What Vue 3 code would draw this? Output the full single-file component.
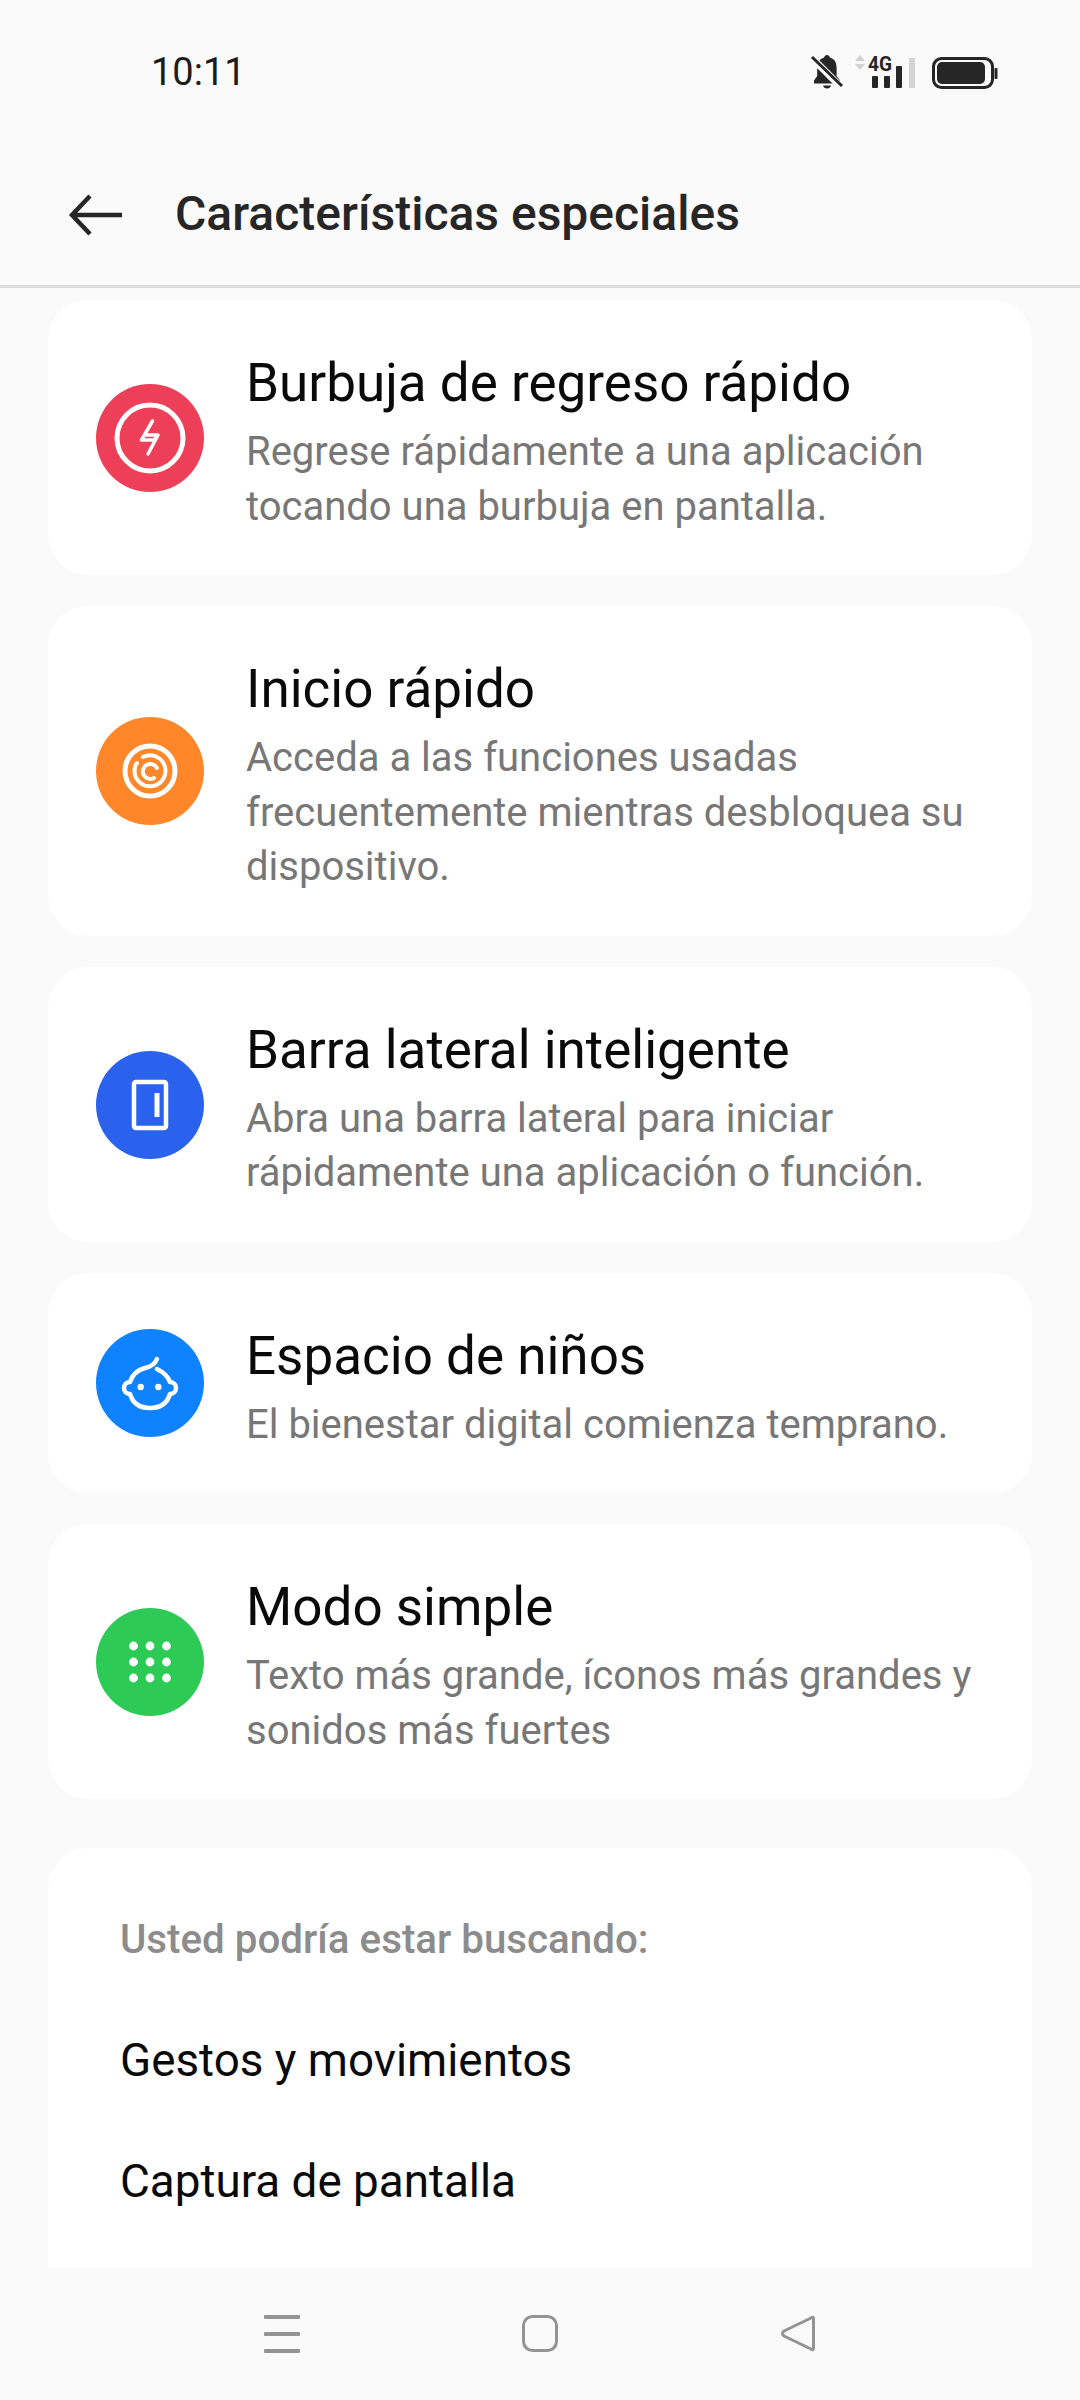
<template>
  <div class="screen">
    <div class="status-bar">
      <span class="clock">10:11</span>
      <svg class="status-icons" width="192" height="40" viewBox="0 0 192 40">
        <!-- bell with slash -->
        <path d="M21 3c1.500 0 2.600 1 2.800 2.600 5 1.400 6.800 5.400 6.800 10.500v8l3.400 4.500v2.900H8v-2.900l3.200-4.500v-8c0-5 2-9.100 7-10.500C18.400 4 19.500 3 21 3z" fill="#262626" />
        <path d="M17 33.500h8c-.4 1.900-2 3-4 3s-3.600-1.100-4-3z" fill="#262626" />
        <path d="M6 6l29 29" stroke="#fafafa" stroke-width="7" />
        <path d="M6 5l30 29" stroke="#262626" stroke-width="3" />
        <path d="M49 9l5-6 5 6zM49 12l5 6 5-6z" fill="#d2d2d2" />
        <text x="62" y="19" class="net-label" textLength="24" lengthAdjust="spacingAndGlyphs">4G</text>
        <rect x="66" y="24" width="6" height="12" rx="1" fill="#262626" />
        <rect x="78" y="24" width="6" height="12" rx="1" fill="#262626" />
        <rect x="90" y="14" width="6" height="22" rx="1" fill="#262626" />
        <rect x="103" y="6" width="6" height="30" fill="#d4d4d4" />
        <rect x="127.500" y="6.500" width="59" height="29" rx="8" fill="none" stroke="#262626" stroke-width="3" />
        <rect x="131" y="10" width="48" height="22" rx="5" fill="#262626" />
        <rect x="188.500" y="16" width="3" height="11" rx="1" fill="#262626" />
      </svg>
    </div>

    <header class="top-bar">
      <svg class="back" width="56" height="42" viewBox="0 0 56 42">
        <path d="M22 2L4 21l18 19M4 21h50" fill="none" stroke="#262626" stroke-width="4.500" />
      </svg>
      <h1 class="title">Características especiales</h1>
    </header>

    <main class="list">
      <section v-for="item in items" :key="item.title" class="card">
        <span class="badge" :style="{ background: item.color }">
          <svg width="108" height="108" viewBox="0 0 108 108" fill="none" stroke="#fff" stroke-width="4" stroke-linecap="round" stroke-linejoin="round">
            <template v-if="item.icon === 'bolt'">
              <circle cx="54" cy="54" r="33" stroke-width="5" />
              <path d="M56.500 37L45.500 56H58L62 51H49.500M62 51L52 70" stroke-width="3.500" />
            </template>
            <template v-else-if="item.icon === 'spiral'">
              <circle cx="54" cy="54" r="25" stroke-width="5" />
              <path d="M47 40A15.500 15.500 0 1 1 38.500 54Q38.500 49 41 46" stroke-width="4" />
              <path d="M61 51A7.500 7.500 0 1 0 58 61" stroke-width="4" />
            </template>
            <template v-else-if="item.icon === 'panel'">
              <rect x="38" y="31" width="32" height="46" rx="2" stroke-width="4.500" stroke-linejoin="miter" />
              <rect x="58.500" y="42" width="5" height="24" stroke="none" fill="#fff" />
            </template>
            <template v-else-if="item.icon === 'baby'">
              <path d="M61 30c-2 5-7 8-12 9-8 2-13 8-15 14-4 0-6 3-6 6s2 6 6 6c3 10 11 14 20 14s17-4 20-14c4 0 6-3 6-6s-2-6-6-6c-2-6-7-10-13-13" stroke-width="4.500" />
              <circle cx="44.700" cy="58" r="3.200" fill="#fff" stroke="none" />
              <circle cx="62.300" cy="58" r="3.200" fill="#fff" stroke="none" />
            </template>
            <template v-else>
              <circle v-for="dot in dots" :key="dot.k" :cx="dot.x" :cy="dot.y" r="4.400" fill="#fff" stroke="none" />
            </template>
          </svg>
        </span>
        <div class="copy">
          <h2>{{ item.title }}</h2>
          <p>{{ item.text }}</p>
        </div>
      </section>

      <section class="card suggestions">
        <h3>Usted podría estar buscando:</h3>
        <a v-for="link in links" :key="link">{{ link }}</a>
      </section>
    </main>

    <nav class="nav-bar">
      <svg width="36" height="38" viewBox="0 0 36 38" fill="#949494">
        <rect y="0" width="36" height="4" rx="1" />
        <rect y="17" width="36" height="4" rx="1" />
        <rect y="34" width="36" height="4" rx="1" />
      </svg>
      <svg width="36" height="38" viewBox="0 0 36 38" fill="none" stroke="#949494" stroke-width="3">
        <rect x="1.500" y="1.500" width="33" height="34" rx="9" />
      </svg>
      <svg width="36" height="38" viewBox="0 0 36 38" fill="none" stroke="#949494" stroke-width="3" stroke-linejoin="round">
        <path d="M33.500 4Q33.500 1 31 3L4 16Q1 18.500 4 21L31 34Q33.500 36 33.500 33z" />
      </svg>
    </nav>
  </div>
</template>

<script setup>
const items = [
  {
    title: 'Burbuja de regreso rápido',
    text: 'Regrese rápidamente a una aplicación tocando una burbuja en pantalla.',
    color: '#ee3f58',
    icon: 'bolt'
  },
  {
    title: 'Inicio rápido',
    text: 'Acceda a las funciones usadas frecuentemente mientras desbloquea su dispositivo.',
    color: '#ff8629',
    icon: 'spiral'
  },
  {
    title: 'Barra lateral inteligente',
    text: 'Abra una barra lateral para iniciar rápidamente una aplicación o función.',
    color: '#2a62ee',
    icon: 'panel'
  },
  {
    title: 'Espacio de niños',
    text: 'El bienestar digital comienza temprano.',
    color: '#0e82ff',
    icon: 'baby'
  },
  {
    title: 'Modo simple',
    text: 'Texto más grande, íconos más grandes y sonidos más fuertes',
    color: '#2dcb55',
    icon: 'grid'
  }
]

const links = ['Gestos y movimientos', 'Captura de pantalla']

const dots = []
for (const y of [38, 54, 70]) {
  for (const x of [37.500, 54, 70.500]) {
    dots.push({ k: `${x}-${y}`, x, y })
  }
}
</script>

<style>
html,
body {
  margin: 0;
  background: #fafafa;
}
</style>

<style scoped>
.screen {
  display: flex;
  flex-direction: column;
  height: 2400px;
  overflow: hidden;
  background: #fafafa;
  font-family: Roboto, "Noto Sans", sans-serif;
}

.status-bar {
  display: flex;
  align-items: center;
  justify-content: space-between;
  height: 144px;
  padding: 0 82px 0 151px;
  box-sizing: border-box;
}

.clock {
  font-size: 38px;
  color: #1c1c1c;
}

.status-icons {
  display: block;
}

.net-label {
  font: 700 20px Roboto, sans-serif;
  fill: #262626;
}

.top-bar {
  display: flex;
  align-items: center;
  height: 144px;
  padding: 0 0 0 68px;
  box-sizing: border-box;
  border-bottom: 3px solid #dcdcdc;
}

.back {
  margin-right: 51px;
}

.title {
  margin: 0 0 3px;
  font-size: 48px;
  font-weight: 500;
  color: #262626;
}

.list {
  flex: 1;
  min-height: 0;
  overflow: hidden;
  display: flex;
  flex-direction: column;
  gap: 31px;
  padding: 12px 48px 0;
}

.card {
  flex: none;
  display: flex;
  align-items: center;
  background: #fff;
  border-radius: 40px;
  padding: 51px 48px 41px;
}

.badge {
  flex: none;
  width: 108px;
  height: 108px;
  border-radius: 50%;
  margin-right: 42px;
  margin-top: -9px;
}

.badge svg {
  display: block;
}

.copy h2 {
  margin: 0 0 10px;
  font-size: 53px;
  line-height: 64px;
  font-weight: 400;
  color: #0a0a0a;
}

.copy p {
  margin: 0;
  font-size: 40px;
  line-height: 54.500px;
  color: #777;
}

.suggestions {
  margin-top: 18px;
  flex-direction: column;
  align-items: flex-start;
  padding: 66px 72px 300px;
}

.suggestions h3 {
  margin: 0 0 34px;
  font-size: 40.300px;
  line-height: 52px;
  font-weight: 500;
  color: #8c8c8c;
}

.suggestions a {
  font-size: 45.800px;
  line-height: 121px;
  color: #0a0a0a;
}

.nav-bar {
  flex: none;
  display: flex;
  align-items: center;
  justify-content: center;
  gap: 222px;
  height: 132px;
}
</style>
